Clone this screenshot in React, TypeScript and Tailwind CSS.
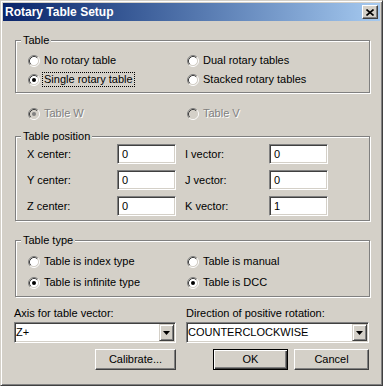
import React from "react";

const FONT = { fontFamily: '"Liberation Sans", Arial, sans-serif' };

function Radio({ checked, disabled }: { checked?: boolean; disabled?: boolean }) {
  return (
    <svg width="12" height="12" viewBox="0 0 12 12" className="shrink-0">
      <circle cx="6" cy="6" r="4.5" fill={disabled ? "#d4d0c8" : "#fff"} />
      <path d="M2.11 9.89 A5.5 5.5 0 0 1 9.89 2.11" stroke="#808080" fill="none" />
      <path d="M9.89 2.11 A5.5 5.5 0 0 1 2.11 9.89" stroke="#fff" fill="none" />
      <path d="M2.82 9.18 A4.5 4.5 0 0 1 9.18 2.82" stroke="#404040" fill="none" />
      <path d="M9.18 2.82 A4.5 4.5 0 0 1 2.82 9.18" stroke="#d4d0c8" fill="none" />
      {checked && <circle cx="6" cy="6" r="2" fill={disabled ? "#808080" : "#000"} />}
    </svg>
  );
}

function Option({
  label,
  checked,
  disabled,
  focused,
  className = "",
}: {
  label: string;
  checked?: boolean;
  disabled?: boolean;
  focused?: boolean;
  className?: string;
}) {
  return (
    <div className={"flex items-center gap-[4px] " + className}>
      <Radio checked={checked} disabled={disabled} />
      <span
        className={
          (disabled ? "text-[#808080] [text-shadow:1px_1px_0_#fff] " : "text-black ") +
          (focused ? "outline-1 outline-dotted outline-black -ml-[1px] px-[1px]" : "")
        }
      >
        {label}
      </span>
    </div>
  );
}

function Group({ title, className = "", children }: { title: string; className?: string; children: React.ReactNode }) {
  return (
    <div className={"relative border border-[#808080] shadow-[inset_1px_1px_0_#fff,1px_1px_0_#fff] " + className}>
      <span className="absolute -top-[7px] left-[5px] px-[2px] bg-[#d4d0c8] leading-[13px]">{title}</span>
      {children}
    </div>
  );
}

function Field({ value }: { value: string }) {
  return (
    <div className="w-[59px] h-[20px] bg-white border border-t-[#808080] border-l-[#808080] border-r-white border-b-white shadow-[inset_1px_1px_0_#404040,inset_-1px_-1px_0_#d4d0c8] flex items-center pl-[4px]">
      {value}
    </div>
  );
}

function Arrow() {
  return (
    <svg width="7" height="4" viewBox="0 0 7 4">
      <polygon points="0,0 7,0 3.5,4" fill="#000" />
    </svg>
  );
}

function Combo({ value, className = "" }: { value: string; className?: string }) {
  return (
    <div
      className={
        "h-[21px] bg-white border border-t-[#808080] border-l-[#808080] border-r-white border-b-white shadow-[inset_1px_1px_0_#404040,inset_-1px_-1px_0_#d4d0c8] flex items-center justify-between pl-[1px] pr-[1px] " +
        className
      }
    >
      <span>{value}</span>
      <div className="w-[15px] h-[17px] bg-[#d4d0c8] border border-t-[#d4d0c8] border-l-[#d4d0c8] border-r-[#404040] border-b-[#404040] shadow-[inset_1px_1px_0_#fff,inset_-1px_-1px_0_#808080] flex items-center justify-center">
        <Arrow />
      </div>
    </div>
  );
}

function Button({ label, primary, className = "" }: { label: string; primary?: boolean; className?: string }) {
  const look = primary
    ? "border border-black shadow-[inset_1px_1px_0_#fff,inset_-1px_-1px_0_#404040,inset_-2px_-2px_0_#808080]"
    : "border border-t-white border-l-white border-r-[#404040] border-b-[#404040] shadow-[inset_-1px_-1px_0_#808080]";
  return (
    <button className={"h-[21px] bg-[#d4d0c8] flex items-center justify-center " + look + " " + className}>
      {label}
    </button>
  );
}

export default function App() {
  return (
    <div
      style={FONT}
      className="w-[383px] h-[386px] bg-[#d4d0c8] border border-t-[#d4d0c8] border-l-[#d4d0c8] border-r-[#404040] border-b-[#404040] shadow-[inset_1px_1px_0_#fff,inset_-1px_-1px_0_#808080] p-[2px] flex flex-col text-[11px] leading-[13px] text-black"
    >
      {/* title bar */}
      <div className="h-[18px] flex items-center justify-between pl-[2px] pr-[2px] bg-linear-to-r from-[#0a246a] to-[#a6caf0]">
        <span className="text-white font-bold text-[12px] leading-[14px]">Rotary Table Setup</span>
        <div className="w-[16px] h-[14px] bg-[#d4d0c8] border border-t-white border-l-white border-r-[#404040] border-b-[#404040] shadow-[inset_-1px_-1px_0_#808080] flex items-center justify-center">
          <svg width="8" height="7" viewBox="0 0 8 7">
            <path d="M0.5 0.5 L7.5 6.5 M7.5 0.5 L0.5 6.5" stroke="#000" strokeWidth="1.6" />
          </svg>
        </div>
      </div>

      <div className="flex flex-col pl-[12px] pr-[10px]">
        <Group title="Table" className="mt-[19px] pt-[10px] pb-[3px]">
          <div className="grid grid-cols-[159px_1fr] pl-[12px]">
            <Option label="No rotary table" className="h-[19px]" />
            <Option label="Dual rotary tables" className="h-[19px]" />
            <Option label="Single rotary table" checked focused className="h-[19px]" />
            <Option label="Stacked rotary tables" className="h-[19px]" />
          </div>
        </Group>

        <div className="grid grid-cols-[159px_1fr] pl-[13px] mt-[11px]">
          <Option label="Table W" checked disabled className="h-[19px]" />
          <Option label="Table V" disabled className="h-[19px]" />
        </div>

        <Group title="Table position" className="mt-[13px] pt-[7px] pb-[4px]">
          <div className="flex flex-col gap-[6px] pl-[11px]">
            {[
              ["X center:", "0", "I vector:", "0"],
              ["Y center:", "0", "J vector:", "0"],
              ["Z center:", "0", "K vector:", "1"],
            ].map(([a, av, b, bv]) => (
              <div key={a} className="flex items-center h-[20px]">
                <span className="w-[90px]">{a}</span>
                <Field value={av} />
                <span className="w-[84px] ml-[9px]">{b}</span>
                <Field value={bv} />
              </div>
            ))}
          </div>
        </Group>

        <Group title="Table type" className="mt-[19px] pt-[10px] pb-[3px]">
          <div className="grid grid-cols-[159px_1fr] pl-[12px]">
            <Option label="Table is index type" className="h-[21px]" />
            <Option label="Table is manual" className="h-[21px]" />
            <Option label="Table is infinite type" checked className="h-[21px]" />
            <Option label="Table is DCC" checked className="h-[21px]" />
          </div>
        </Group>

        <div className="-ml-[1px] mt-[10px] flex flex-col">
          <div className="flex">
            <span className="w-[172px]">Axis for table vector:</span>
            <span>Direction of positive rotation:</span>
          </div>
          <div className="flex mt-[2px]">
            <Combo value="Z+" className="w-[162px]" />
            <Combo value="COUNTERCLOCKWISE" className="w-[183px] ml-[10px]" />
          </div>
          <div className="flex mt-[6px]">
            <Button label="Calibrate..." className="w-[81px] ml-[81px]" />
            <Button label="OK" primary className="w-[75px] ml-[37px]" />
            <Button label="Cancel" className="w-[75px] ml-[6px]" />
          </div>
        </div>
      </div>
    </div>
  );
}
